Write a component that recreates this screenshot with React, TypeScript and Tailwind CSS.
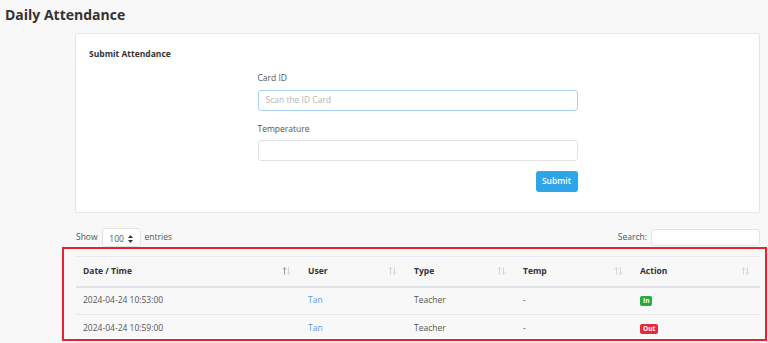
type Row = {
  time: string;
  user: string;
  type: string;
  temp: string;
  action: "In" | "Out";
};

const rows: Row[] = [
  { time: "2024-04-24 10:53:00", user: "Tan", type: "Teacher", temp: "-", action: "In" },
  { time: "2024-04-24 10:59:00", user: "Tan", type: "Teacher", temp: "-", action: "Out" },
];

const columns = [
  { label: "Date / Time", width: "w-[225px]", active: true },
  { label: "User", width: "w-[106px]", active: false },
  { label: "Type", width: "w-[109px]", active: false },
  { label: "Temp", width: "w-[117px]", active: false },
  { label: "Action", width: "w-[127px]", active: false },
];

function SortIcon({ active }: { active: boolean }) {
  return (
    <svg width="9" height="8" viewBox="0 0 9 8" fill="none" strokeWidth="0.9" strokeLinecap="round">
      <g stroke={active ? "#8f929b" : "#cfd2d8"}>
        <path d="M2.5 7.5V0.8M1 2.3L2.5 0.8L4 2.3" />
      </g>
      <g stroke="#cfd2d8">
        <path d="M6.5 0.5V7.2M5 5.7L6.5 7.2L8 5.7" />
      </g>
    </svg>
  );
}

function SelectCaret() {
  return (
    <svg width="5" height="8" viewBox="0 0 5 8" fill="#333">
      <path d="M2.5 0L5 3H0Z" />
      <path d="M2.5 8L5 5H0Z" />
    </svg>
  );
}

export default function App() {
  return (
    <div
      className="min-h-screen bg-[#f8f8f8] text-[#555] overflow-hidden"
      style={{ fontFamily: '"Open Sans", "Noto Sans", sans-serif' }}
    >
      <h1 className="pl-[5px] pt-[4px] h-[33px] text-[14px] font-bold text-[#333] leading-[22px]">
        Daily Attendance
      </h1>

      <div className="ml-[75px] w-[685px] h-[180px] bg-white border border-[#e5e5e5] rounded-[2px] px-[13px] pt-[14px]">
        <h2 className="text-[8.5px] font-bold text-[#333] leading-[12px]">Submit Attendance</h2>

        <div className="w-[320px] mx-auto mt-[12px] flex flex-col">
          <label className="text-[8.5px] text-[#555] leading-[12px]">Card ID</label>
          <div className="mt-[6px] h-[21px] rounded-[3px] border border-[#a9d1f7] bg-white flex items-center px-[7px] text-[8.5px] text-[#b5b5b5]">
            Scan the ID Card
          </div>
          <label className="mt-[12px] text-[8.5px] text-[#555] leading-[12px]">Temperature</label>
          <div className="mt-[5px] h-[21px] rounded-[3px] border border-[#e1e3e8] bg-white" />
          <div className="mt-[10px] flex justify-end">
            <button className="w-[42px] h-[21px] rounded-[3px] bg-[#2fa4e7] text-white text-[8.5px] font-semibold">
              Submit
            </button>
          </div>
        </div>
      </div>

      <div className="ml-[76px] w-[684px] mt-[15px] h-[19px] flex items-center justify-between text-[8.5px] text-[#555]">
        <div className="flex items-center gap-[4px]">
          <span>Show</span>
          <div className="w-[39px] h-[19px] bg-white border border-[#e4e4e4] rounded-[3px] flex items-center justify-center gap-[4px] pt-[3px]">
            <span>100</span>
            <SelectCaret />
          </div>
          <span>entries</span>
        </div>
        <div className="flex items-center gap-[4px]">
          <span>Search:</span>
          <div className="w-[109px] h-[17px] bg-white border border-[#e4e4e4] rounded-[3px]" />
        </div>
      </div>

      <div className="ml-[62px] w-[705px] h-[94px] border-2 border-[#e8222f] pl-[12px] pr-[4px] pt-[7px]">
        <table className="w-[684px] border-collapse text-[8.5px] table-fixed">
          <thead>
            <tr className="border-t border-[#e6e8ee] border-b-2 border-b-[#dfe2e8]">
              {columns.map((c) => (
                <th key={c.label} className={`${c.width} h-[30px] px-[7px] text-left font-bold text-[#333]`}>
                  <div className="flex items-center justify-between pr-[3px]">
                    <span>{c.label}</span>
                    <SortIcon active={c.active} />
                  </div>
                </th>
              ))}
            </tr>
          </thead>
          <tbody>
            {rows.map((r) => (
              <tr key={r.time} className="border-b border-[#e6e8ee]">
                <td className="h-[28px] px-[7px] text-[#555]">{r.time}</td>
                <td className="px-[7px] text-[#5b9be0]">{r.user}</td>
                <td className="px-[7px] text-[#555]">{r.type}</td>
                <td className="px-[7px] text-[#555]">{r.temp}</td>
                <td className="px-[7px]">
                  <span
                    className={`inline-block rounded-[2px] px-[3px] text-[6.5px] font-bold leading-[10px] text-white ${
                      r.action === "In" ? "bg-[#28a745]" : "bg-[#e02d3c]"
                    }`}
                  >
                    {r.action}
                  </span>
                </td>
              </tr>
            ))}
          </tbody>
        </table>
      </div>
    </div>
  );
}
